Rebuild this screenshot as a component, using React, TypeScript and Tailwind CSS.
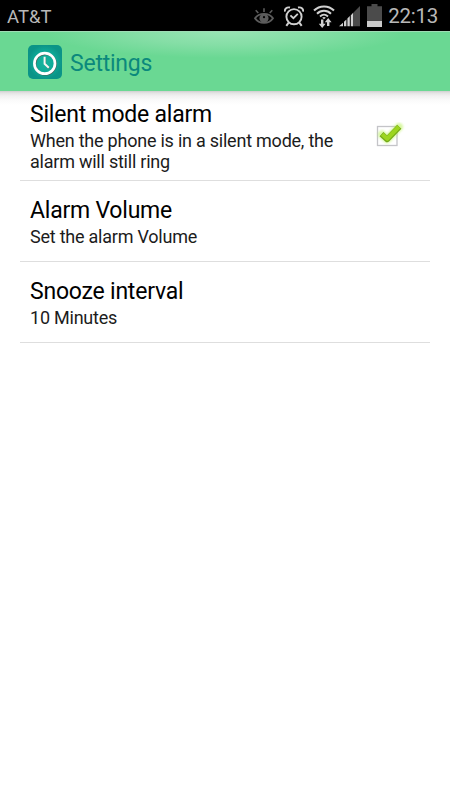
import React, { useState } from 'react';

const SETTINGS = [
    { key: 'silent', title: 'Silent mode alarm', summary: 'When the phone is in a silent mode, the alarm will still ring', checkable: true, height: 'h-[90px]' },
    { key: 'volume', title: 'Alarm Volume', summary: 'Set the alarm Volume', checkable: false, height: 'h-[81px]' },
    { key: 'snooze', title: 'Snooze interval', summary: '10 Minutes', checkable: false, height: 'h-[81px]' },
];

function EyeIcon() {
    return (
        <svg width="20" height="17" viewBox="0 0 20 17" fill="none" stroke="#5c5c5c">
            <path d="M1 10.3C5 4.3 15 4.3 19 10.3C15 16.5 5 16.5 1 10.3Z" strokeWidth="1.8" />
            <circle cx="10" cy="10.3" r="3.6" fill="#5c5c5c" strokeWidth="2" />
            <circle cx="10" cy="9.2" r="1.1" fill="#000" stroke="none" />
            <path d="M10 0.3V4M1.7 2.3L4.3 5M18.3 2.3L15.7 5" strokeWidth="1.6" />
        </svg>
    );
}

function AlarmIcon() {
    return (
        <svg width="20" height="21" viewBox="0 0 20 21" fill="none" stroke="#d0d0d0">
            <circle cx="10" cy="10.7" r="7.6" strokeWidth="1.9" />
            <path d="M6.4 9.3L9.4 12.2L13.8 7.8" strokeWidth="1.8" />
            <path d="M0.8 5.6C0.6 2.6 2.7 0.8 6 1.5M19.2 5.6C19.4 2.6 17.3 0.8 14 1.5" strokeWidth="1.9" />
            <path d="M4.5 16.8L2.3 19.8M15.5 16.8L17.7 19.8" strokeWidth="2" />
        </svg>
    );
}

function WifiIcon() {
    return (
        <svg width="22" height="23" viewBox="0 0 22 23" fill="none" stroke="#d0d0d0">
            <path d="M1 5.5C6.5 0 15.5 0 21 5.5" strokeWidth="2" />
            <path d="M4 8.7C8 4.8 14 4.8 18 8.7" strokeWidth="2" />
            <path d="M7 11.5C9.5 9.2 12.5 9.2 15 11.5" strokeWidth="1.8" />
            <path d="M9.2 12.8Q11 11.4 12.8 12.8L11 14.2Z" fill="#d0d0d0" stroke="none" />
            <path d="M8 14.5V18.8H5.8L9.2 22.9L12.6 18.8H10.4V14.5Z" fill="#d0d0d0" stroke="none" />
            <path d="M14 21V17.2H11.8L15.2 13L18.6 17.2H16.4V21Z" fill="#d0d0d0" stroke="none" />
        </svg>
    );
}

function SignalIcon() {
    return (
        <svg width="21" height="21" viewBox="0 0 21 21">
            <path d="M13.3 7.7L21 0V20.3H13.3Z" fill="#4b4b4b" />
            <path d="M0 20.3L4 16.8V20.3ZM5 15.8L7.4 13.4V20.3H5ZM8.4 12.4L10.8 10V20.3H8.4ZM11.8 9.2L14 7V20.3H11.8Z" fill="#d0d0d0" />
        </svg>
    );
}

function BatteryIcon() {
    return (
        <svg width="15" height="23" viewBox="0 0 15 23">
            <path d="M4.5 0H10.5V2.2H15V17H0V2.2H4.5Z" fill="#4b4b4b" />
            <path d="M0 17H15V23H0Z" fill="#cbcbcb" />
        </svg>
    );
}

function StatusBar() {
    return (
        <div className="flex h-[31px] shrink-0 items-center bg-black pt-px pr-3 pl-[7px] text-[#b8b8b8]">
            <span className="pt-0.5 text-[18.5px] leading-none">AT&amp;T</span>
            <div className="ml-auto flex items-center">
                <EyeIcon />
                <div className="ml-2.5"><AlarmIcon /></div>
                <div className="ml-[9px]"><WifiIcon /></div>
                <div className="ml-1"><SignalIcon /></div>
                <div className="ml-[7px] -mt-px"><BatteryIcon /></div>
                <span className="ml-1.5 pt-px text-[20.5px] leading-none tracking-[-0.25px]">22:13</span>
            </div>
        </div>
    );
}

function AppIcon() {
    return (
        <svg width="34" height="34" viewBox="0 0 34 34" fill="none">
            <defs>
                <radialGradient id="tile">
                    <stop offset="0" stopColor="#16b59f" />
                    <stop offset="0.65" stopColor="#0ea896" />
                    <stop offset="1" stopColor="#0b9487" />
                </radialGradient>
            </defs>
            <rect width="34" height="34" rx="5" fill="url(#tile)" />
            <circle cx="17.3" cy="19" r="10.3" stroke="#4a5f55" strokeWidth="2.4" />
            <path d="M17.2 12.4V19.4L21.2 23.2" stroke="#4a7f70" strokeWidth="2" />
            <circle cx="16.7" cy="18.4" r="10.3" stroke="#fff" strokeWidth="2.7" />
            <path d="M16.6 11.8V18.8L20.8 22.8" stroke="#f3f8f5" strokeWidth="2" />
        </svg>
    );
}

function Header() {
    return (
        <header className="flex h-[60px] shrink-0 items-center border-t border-[#9fdcb5] bg-[#6ad893] bg-[radial-gradient(ellipse_180px_26px_at_225px_0px,#98e4b4_0%,#85dea6_50%,#6ad893_100%)] pl-7">
            <AppIcon />
            <h1 className="ml-2 pt-[3px] text-[23px] leading-none tracking-[-0.23px] text-[#0b897c]">Settings</h1>
        </header>
    );
}

function CheckBox({ checked, onChange }: { checked: boolean; onChange: () => void }) {
    return (
        <button type="button" role="checkbox" aria-checked={checked} onClick={onChange} className="mr-[25px] shrink-0">
            <svg width="30" height="28" viewBox="0 0 30 28" fill="none">
                <rect x="2.5" y="4.5" width="19.5" height="19" fill="#fff" stroke="#c4c4c8" strokeWidth="1.3" />
                {checked && (
                    <>
                        <path d="M7 12.5L12.2 17.3L24 5" stroke="#b9f25a" strokeOpacity="0.55" strokeWidth="8" strokeLinejoin="round" strokeLinecap="round" className="blur-[1px]" />
                        <path d="M6.5 12.2L12.2 17.3L24.3 4.7" stroke="#72a818" strokeWidth="5.8" strokeLinejoin="round" />
                        <path d="M7.2 12.2L12.2 16.7L23.8 4.7" stroke="#9cd51f" strokeWidth="4.2" strokeLinejoin="round" />
                    </>
                )}
            </svg>
        </button>
    );
}

export default function App() {
    const [silentAlarm, setSilentAlarm] = useState(true);

    return (
        <div className="flex h-[800px] w-[450px] flex-col overflow-hidden bg-white font-['Roboto',sans-serif]">
            <StatusBar />
            <Header />
            <main className="bg-[linear-gradient(to_bottom,#cfcfcf_0px,#e4e4e4_2px,#f1f1f1_5px,#fafafa_9px,#ffffff_14px)] px-5">
                {SETTINGS.map((item) => (
                    <div key={item.key} className={`flex items-center border-b border-[#dedede] pl-2.5 ${item.height}`}>
                        <div className="min-w-0 flex-1 pt-[3px]">
                            <h2 className="mb-[3px] text-[23px] leading-[26px] tracking-[-0.22px] text-black">{item.title}</h2>
                            <p className="max-w-[320px] text-[18px] leading-[20.5px] tracking-[-0.23px] text-[#1c1c1c]">{item.summary}</p>
                        </div>
                        {item.checkable && <CheckBox checked={silentAlarm} onChange={() => setSilentAlarm(!silentAlarm)} />}
                    </div>
                ))}
            </main>
        </div>
    );
}
